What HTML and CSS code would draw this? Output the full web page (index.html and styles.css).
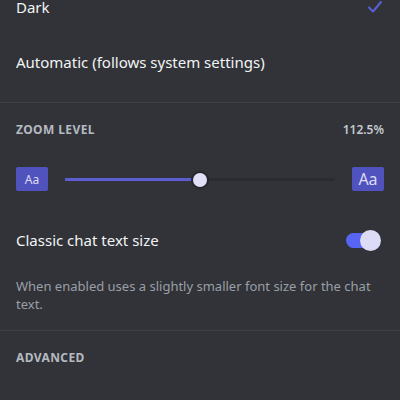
FILE: index.html
```html
<!DOCTYPE html>
<html lang="en">
<head>
    <meta charset="UTF-8">
    <meta name="viewport" content="width=device-width, initial-scale=1.0">
    <title>Appearance</title>
    <link rel="stylesheet" href="styles.css">
</head>
<body>
    <div class="screen">
        <div class="section theme">
            <div class="option">
                <span class="option-label">Dark</span>
                <svg class="check" width="16" height="16" viewBox="0 0 16 16">
                    <path d="M2 8.5l4 4L14 3" fill="none" stroke="#5b5fd6" stroke-width="2" stroke-linecap="round" stroke-linejoin="round"/>
                </svg>
            </div>
            <div class="option">
                <span class="option-label">Automatic (follows system settings)</span>
            </div>
        </div>

        <div class="section zoom">
            <div class="section-head">
                <span class="section-title">Zoom Level</span>
                <span class="section-value">112.5%</span>
            </div>

            <div class="slider-row">
                <div class="aa-box small">Aa</div>
                <div class="slider">
                    <div class="slider-fill"></div>
                    <div class="slider-thumb"></div>
                </div>
                <div class="aa-box large">Aa</div>
            </div>

            <div class="toggle-row">
                <span class="option-label">Classic chat text size</span>
                <div class="toggle">
                    <div class="toggle-knob"></div>
                </div>
            </div>

            <p class="hint">When enabled uses a slightly smaller font size for the chat text.</p>
        </div>

        <div class="section advanced">
            <div class="section-head">
                <span class="section-title">Advanced</span>
            </div>
        </div>
    </div>
</body>
</html>
```

FILE: styles.css
```css
* {
    margin: 0;
    padding: 0;
    box-sizing: border-box;
}

body {
    background: #313338;
    font-family: 'Noto Sans', 'Open Sans', sans-serif;
    color: #f2f3f5;
    overflow: hidden;
}

.screen {
    margin-top: -21px;
}

.section {
    border-bottom: 1px solid #3d3f45;
}

.section.advanced {
    border-bottom: none;
}

.theme {
    padding-bottom: 13px;
}

.option {
    height: 55px;
    display: flex;
    align-items: center;
    justify-content: space-between;
    padding: 0 16px;
}

.option-label {
    font-size: 15px;
    font-weight: 400;
    color: #f2f3f5;
}

.check {
    margin-right: 1px;
}

.section-head {
    height: 52px;
    display: flex;
    align-items: center;
    justify-content: space-between;
    padding: 0 16px;
}

.section-title {
    font-size: 12px;
    font-weight: 700;
    text-transform: uppercase;
    color: #b5bac1;
    letter-spacing: 0.4px;
}

.section-value {
    font-size: 12px;
    font-weight: 600;
    color: #c4c9ce;
}

.slider-row {
    height: 48px;
    display: flex;
    align-items: center;
    padding: 0 16px;
    gap: 17px;
}

.aa-box {
    width: 32px;
    height: 24px;
    background: #5053bd;
    border-radius: 2px;
    color: #dcdcf5;
    display: flex;
    align-items: center;
    justify-content: center;
    flex-shrink: 0;
}

.aa-box.small {
    font-size: 12px;
}

.aa-box.large {
    font-size: 16px;
}

.slider {
    flex: 1;
    height: 3px;
    background: #2a2c31;
    position: relative;
    margin-top: 1px;
}

.slider-fill {
    width: 50%;
    height: 100%;
    background: #5b5dd0;
}

.slider-thumb {
    position: absolute;
    left: 50%;
    top: 50%;
    width: 14px;
    height: 14px;
    margin: -7px 0 0 -7px;
    border-radius: 50%;
    background: #e2e0f7;
    box-shadow: 0 0 0 2px #26272c;
}

.toggle-row {
    height: 74px;
    display: flex;
    align-items: center;
    justify-content: space-between;
    padding: 0 16px;
}

.toggle {
    width: 30px;
    height: 15px;
    border-radius: 8px;
    background: #5865f2;
    position: relative;
    margin-right: 8px;
}

.toggle-knob {
    position: absolute;
    right: -5px;
    top: 50%;
    width: 21px;
    height: 21px;
    margin-top: -10.5px;
    border-radius: 50%;
    background: #dcdcf6;
}

.hint {
    padding: 0 16px 17px;
    font-size: 13px;
    line-height: 18px;
    color: #9a9fa7;
}
```
